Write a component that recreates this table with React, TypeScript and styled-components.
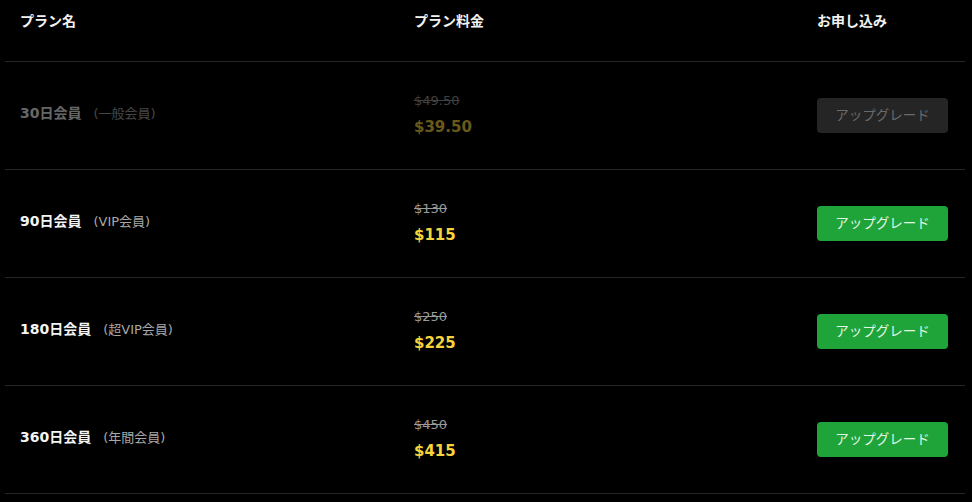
import React from 'react';
import styled, { createGlobalStyle } from 'styled-components';

const GlobalStyle = createGlobalStyle`
  html, body {
    margin: 0;
    padding: 0;
    background: #000;
  }
  body {
    font-family: "DejaVu Sans", "Noto Sans CJK JP", sans-serif;
    color: #fff;
  }
`;

const Table = styled.div`
  width: 960px;
  margin-left: 5px;
`;

const Row = styled.div<{ $head?: boolean }>`
  display: grid;
  grid-template-columns: 394px 403px 1fr;
  align-items: ${(p) => (p.$head ? 'start' : 'center')};
  height: ${(p) => (p.$head ? '62px' : '108px')};
  box-sizing: border-box;
  border-bottom: 1px solid #262626;
`;

const Cell = styled.div<{ $dim?: boolean }>`
  padding: 0 15px;
  opacity: ${(p) => (p.$dim ? 0.42 : 1)};
`;

const NameCell = styled(Cell)`
  line-height: 18px;
  margin-top: -5px;
`;

const HeadCell = styled.div`
  padding: 12px 15px 0;
  font-family: "Noto Sans CJK JP", sans-serif;
  font-size: 14px;
  font-weight: 700;
  line-height: 16px;
  color: #f2f2f2;
`;

const PlanName = styled.span`
  font-size: 14px;
  font-weight: 700;
  color: #f4f4f4;
`;

const PlanSub = styled.span`
  margin-left: 12px;
  font-size: 13px;
  color: #a8a8a8;
`;

const PriceBox = styled.div`
  display: flex;
  flex-direction: column;
  margin-top: -3px;
`;

const OldPrice = styled.s`
  font-size: 13px;
  line-height: 18px;
  color: #9a9a9a;
`;

const NewPrice = styled.span`
  margin-top: 7px;
  font-size: 15px;
  font-weight: 700;
  line-height: 20px;
  color: #f7d43c;
`;

const UpgradeButton = styled.button<{ $disabled?: boolean }>`
  width: 131px;
  height: 35px;
  border: none;
  border-radius: 4px;
  background: ${(p) => (p.$disabled ? '#252525' : '#1fa43a')};
  color: ${(p) => (p.$disabled ? '#6a6a6a' : '#e4f5e6')};
  font-family: "Noto Sans CJK JP", sans-serif;
  font-size: 13.5px;
  padding: 0 0 4px;
  cursor: pointer;
`;

const plans = [
  { name: '30日会員', sub: '(一般会員)', old: '$49.50', price: '$39.50', disabled: true },
  { name: '90日会員', sub: '(VIP会員)', old: '$130', price: '$115', disabled: false },
  { name: '180日会員', sub: '(超VIP会員)', old: '$250', price: '$225', disabled: false },
  { name: '360日会員', sub: '(年間会員)', old: '$450', price: '$415', disabled: false },
];

export default function App() {
  return (
    <>
      <GlobalStyle />
      <Table>
        <Row $head>
          <HeadCell>プラン名</HeadCell>
          <HeadCell>プラン料金</HeadCell>
          <HeadCell>お申し込み</HeadCell>
        </Row>
        {plans.map((plan) => (
          <Row key={plan.name}>
            <NameCell $dim={plan.disabled}>
              <PlanName>{plan.name}</PlanName>
              <PlanSub>{plan.sub}</PlanSub>
            </NameCell>
            <Cell $dim={plan.disabled}>
              <PriceBox>
                <OldPrice>{plan.old}</OldPrice>
                <NewPrice>{plan.price}</NewPrice>
              </PriceBox>
            </Cell>
            <Cell>
              <UpgradeButton $disabled={plan.disabled}>アップグレード</UpgradeButton>
            </Cell>
          </Row>
        ))}
      </Table>
    </>
  );
}
